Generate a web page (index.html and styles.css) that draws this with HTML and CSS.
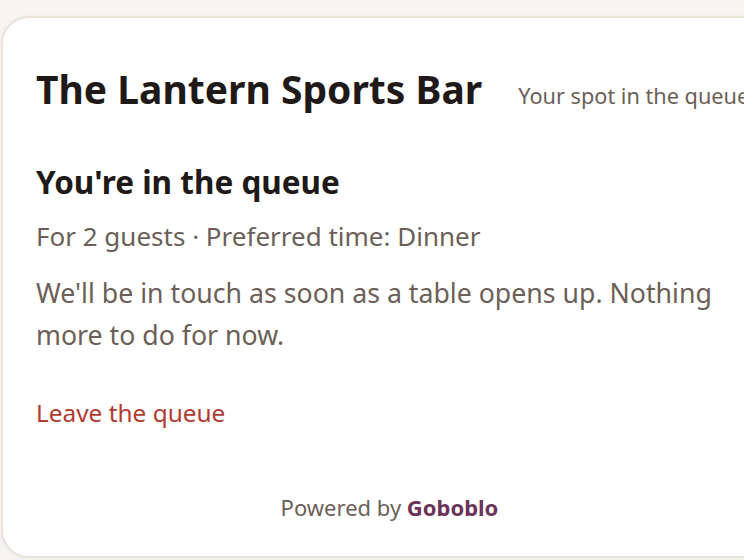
FILE: index.html
```html
<!DOCTYPE html>
<html lang="en">
<head>
<meta charset="utf-8">
<title>The Lantern Sports Bar</title>
<link rel="stylesheet" href="styles.css">
</head>
<body>
<main class="card">
  <header class="head">
    <h1 class="title">The Lantern Sports Bar</h1>
    <span class="subtitle">Your spot in the queue</span>
  </header>
  <section class="status">
    <h2 class="status-title">You're in the queue</h2>
    <p class="meta">For 2 guests · Preferred time: Dinner</p>
    <p class="note">We'll be in touch as soon as a table opens up. Nothing more to do for now.</p>
    <a class="leave" href="#">Leave the queue</a>
  </section>
  <footer class="footer">Powered by <strong class="brand">Goboblo</strong></footer>
</main>
</body>
</html>
```
FILE: styles.css
```css
html, body {
  margin: 0;
  padding: 0;
  background: #f6f5f3;
  overflow: hidden;
  height: 560px;
}
body {
  font-family: "Noto Sans", "Open Sans", sans-serif;
  color: #1f1a17;
}
.card {
  box-sizing: border-box;
  margin: 16px 0 0 1px;
  width: 778px;
  height: 542px;
  background: #ffffff;
  border: 2px solid #e9e2d9;
  border-radius: 28px;
  padding: 48px 34px 0 33px;
  display: flex;
  flex-direction: column;
  box-shadow: 0 2px 8px rgba(60, 40, 20, 0.04);
}
.head {
  display: flex;
  align-items: baseline;
  gap: 36px;
}
.title {
  margin: 0;
  font-size: 39px;
  font-weight: 700;
  line-height: 1.2;
  white-space: nowrap;
}
.subtitle {
  font-size: 21.7px;
  color: #6b5f58;
  white-space: nowrap;
}
.status {
  margin-top: 49px;
  width: 700px;
}
.status-title {
  margin: 0;
  font-size: 31.5px;
  font-weight: 700;
  line-height: 1.3;
}
.meta {
  margin: 15px 0 0;
  font-size: 26px;
  line-height: 1.4;
  color: #6b5f58;
}
.note {
  margin: 18px 0 0;
  font-size: 26.7px;
  line-height: 1.575;
  color: #6b5f58;
}
.leave {
  display: inline-block;
  margin-top: 40px;
  font-size: 24.4px;
  color: #b23a30;
  text-decoration: none;
}
.footer {
  margin-top: auto;
  margin-bottom: 34px;
  text-align: center;
  font-size: 22px;
  color: #6b5f58;
}
.brand {
  color: #6b3358;
  font-weight: 700;
}
```
